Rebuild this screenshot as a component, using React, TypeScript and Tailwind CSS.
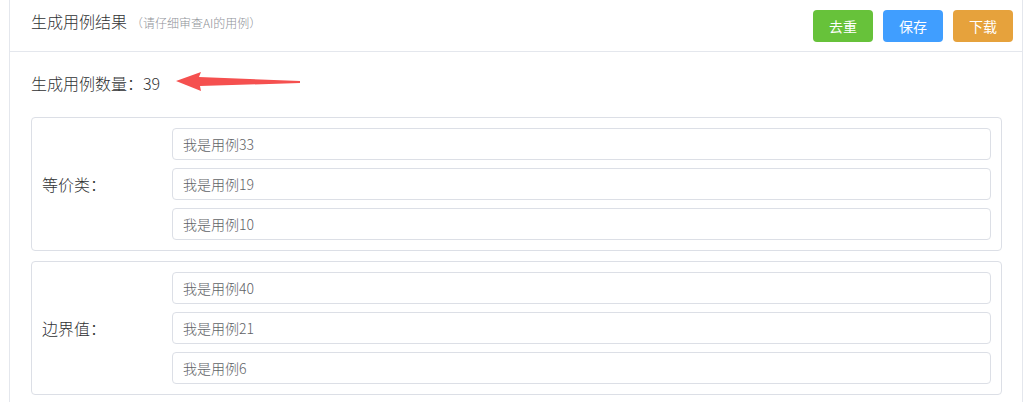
const groups = [
  { label: "等价类：", cases: ["我是用例33", "我是用例19", "我是用例10"] },
  { label: "边界值：", cases: ["我是用例40", "我是用例21", "我是用例6"] },
];

const Arrow = () => (
  <svg width="126" height="24" viewBox="0 0 126 24" className="ml-[16px]">
    <path d="M0 10 L25 1 L23 6 L124 10 L124 12 L24 15 L25 20 Z" fill="#f5504f" />
  </svg>
);

export default function App() {
  return (
    <div className="h-[402px] overflow-hidden bg-white font-['Noto_Sans_CJK_SC',sans-serif] font-light">
      <div className="ml-[9px] w-[1014px] border-x border-[#e4e7ed] min-h-[402px]">
        <div className="flex h-[52px] items-start justify-between border-b border-[#e4e7ed] pl-[21px] pr-[9px]">
          <div className="mt-[10px] flex items-baseline">
            <span className="text-[16px] leading-[22px] text-[#303133]">生成用例结果</span>
            <span className="ml-[4px] text-[12px] text-[#909399]">（请仔细审查AI的用例）</span>
          </div>
          <div className="mt-[10px] flex gap-[10px] font-normal">
            <button className="h-[32px] w-[60px] rounded-[4px] bg-[#67c23a] text-[14px] text-white">去重</button>
            <button className="h-[32px] w-[60px] rounded-[4px] bg-[#409eff] text-[14px] text-white">保存</button>
            <button className="h-[32px] w-[60px] rounded-[4px] bg-[#e6a23c] text-[14px] text-white">下载</button>
          </div>
        </div>
        <div className="pl-[21px] pr-[20px]">
          <div className="mt-[19px] flex h-[24px] items-center">
            <span className="text-[16px] text-[#303133]">生成用例数量：39</span>
            <Arrow />
          </div>
          <div className="mt-[22px] flex flex-col gap-[10px]">
            {groups.map((g) => (
              <div key={g.label} className="flex items-center rounded-[4px] border border-[#dcdfe6] py-[10px] pl-[10px] pr-[10px]">
                <div className="w-[130px] text-[16px] text-[#303133]">{g.label}</div>
                <div className="flex flex-1 flex-col gap-[8px]">
                  {g.cases.map((c) => (
                    <div key={c} className="flex h-[32px] items-center rounded-[4px] border border-[#dcdfe6] px-[10px] text-[14px] text-[#606266]">
                      {c}
                    </div>
                  ))}
                </div>
              </div>
            ))}
          </div>
        </div>
      </div>
    </div>
  );
}
